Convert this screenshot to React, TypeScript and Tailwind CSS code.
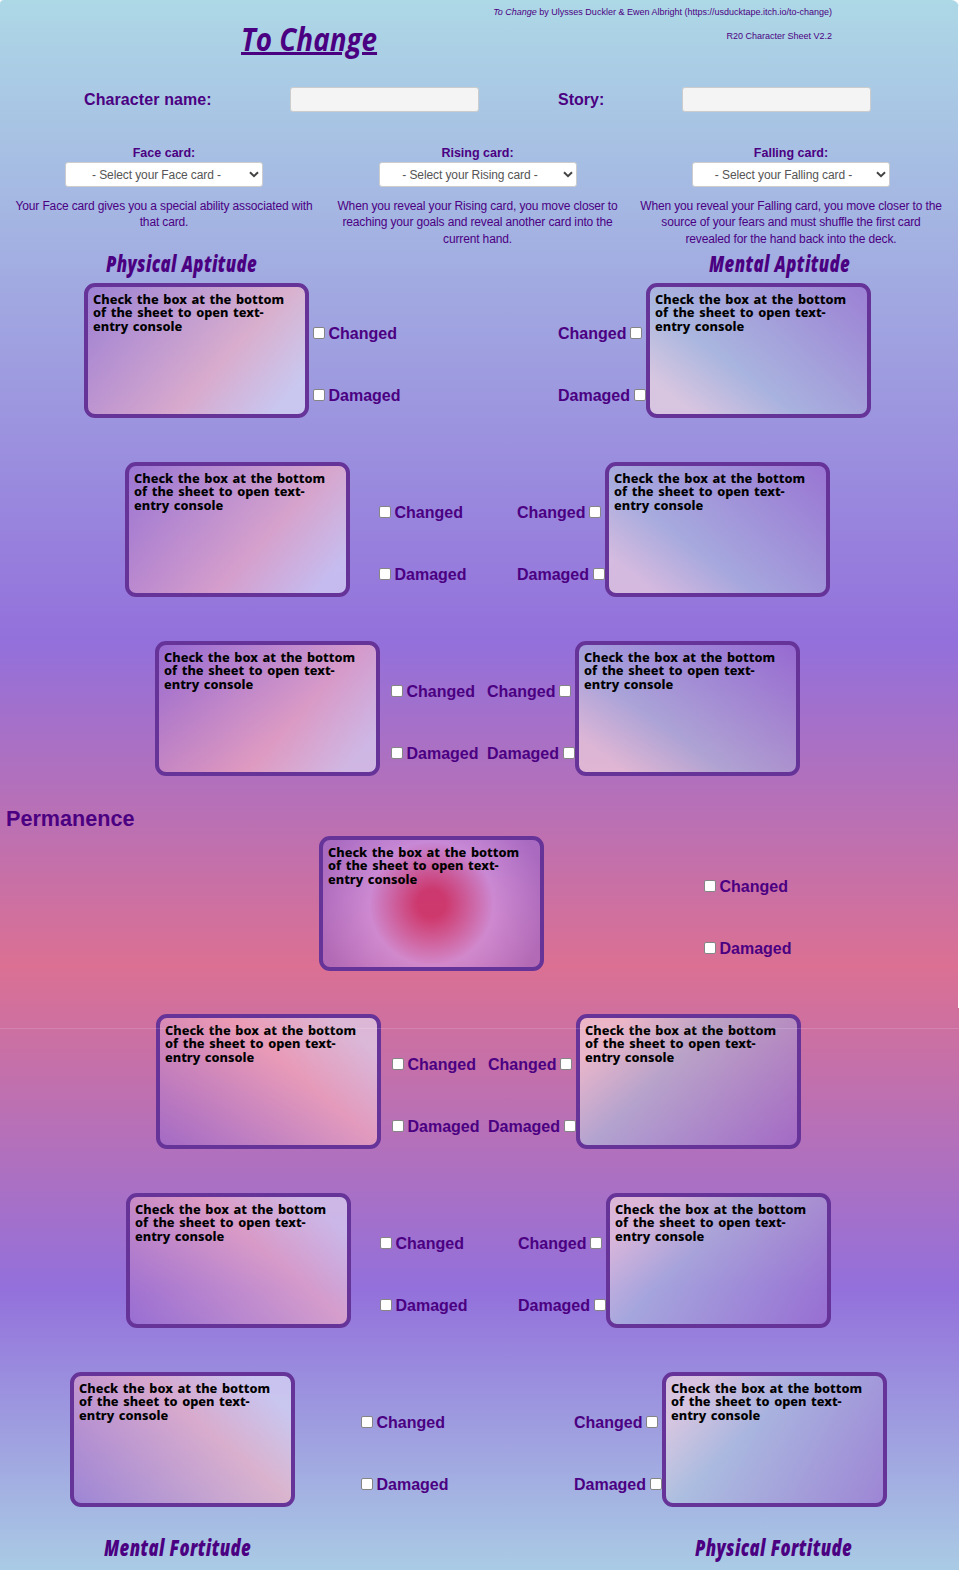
import React from "react";

const NOTE = ["Check the box at the bottom", "of the sheet to open text-", "entry console"];

function Card({ fill }: { fill: string }) {
  return (
    <div className={`h-[135px] w-[225px] shrink-0 rounded-[11px] border-4 border-[#663399] pt-[6px] pl-[5px] ${fill}`}>
      <p className="w-[190px] origin-left scale-x-[1.063] font-['Noto_Sans',sans-serif] text-[12px] leading-[13.4px] font-extrabold [word-spacing:1.2px] whitespace-nowrap text-black">
        {NOTE[0]}
        <br />
        {NOTE[1]}
        <br />
        {NOTE[2]}
      </p>
    </div>
  );
}

function Box() {
  return (
    <input
      type="checkbox"
      className="block h-3 w-3 shrink-0 appearance-none rounded-[2px] border border-[#858585] bg-white"
    />
  );
}

function Checks({ side }: { side: "left" | "right" }) {
  return (
    <div className="flex w-[94px] shrink-0 flex-col gap-[42px] pt-10 text-base leading-5 font-bold">
      {["Changed", "Damaged"].map((name) => (
        <label key={name} className="flex h-5 items-center gap-[3.5px] whitespace-nowrap">
          {side === "left" && <Box />}
          <span className="pt-[1.4px]">{name}</span>
          {side === "right" && <Box />}
        </label>
      ))}
    </div>
  );
}

type Row = { pad: string; a: string; b: string; c: string; left: string; right: string };

const leftTop = "bg-[linear-gradient(133deg,#9966cc99_0%,#ffb6c199_61%,#e6e6fa99_90%)] bg-origin-padding";
const rightTop = "bg-[linear-gradient(217deg,#9966cc99_0%,#b0c4de99_62%,#ffe4e199_88%)] bg-origin-padding";
const leftBottom = "bg-[linear-gradient(40deg,#9966cc99_0%,#ffb6c199_60%,#e6e6fa99_88%)] bg-origin-padding";
const rightBottom = "bg-[linear-gradient(315deg,#9966cc99_0%,#b0c4de99_60%,#ffe4e199_87%)] bg-origin-padding";

const upper: Row[] = [
  { pad: "pl-[84px]", a: "w-[4px]", b: "w-[151px]", c: "-ml-[6px]", left: leftTop, right: rightTop },
  { pad: "pl-[125px]", a: "w-[29px]", b: "w-[44px]", c: "-ml-[6px]", left: leftTop, right: rightTop },
  { pad: "pl-[155px]", a: "w-[11px]", b: "w-[2px]", c: "-ml-[6px]", left: leftTop, right: rightTop },
];

const lower: Row[] = [
  { pad: "pl-[156px]", a: "w-[11px]", b: "w-[2px]", c: "-ml-[6px]", left: leftBottom, right: rightBottom },
  { pad: "pl-[126px]", a: "w-[29px]", b: "w-[44px]", c: "-ml-[6px]", left: leftBottom, right: rightBottom },
  { pad: "pl-[70px]", a: "w-[66px]", b: "w-[119px]", c: "-ml-[6px]", left: leftBottom, right: rightBottom },
];

function CardRow({ row }: { row: Row }) {
  return (
    <div className={`flex h-[135px] ${row.pad}`}>
      <Card fill={row.left} />
      <div className={`shrink-0 ${row.a}`} />
      <Checks side="left" />
      <div className={`shrink-0 ${row.b}`} />
      <Checks side="right" />
      <div className={`shrink-0 ${row.c}`} />
      <Card fill={row.right} />
    </div>
  );
}

function Heading({ children }: { children: string }) {
  return (
    <h2 className="origin-left scale-x-[0.745] font-['Open_Sans',sans-serif] text-[22.5px] leading-[31px] font-extrabold tracking-[0.5px] whitespace-nowrap italic">
      {children}
    </h2>
  );
}

const picks = [
  { name: "Face", lines: ["Your Face card gives you a special ability associated with", "that card."] },
  {
    name: "Rising",
    lines: ["When you reveal your Rising card, you move closer to", "reaching your goals and reveal another card into the", "current hand."],
  },
  {
    name: "Falling",
    lines: ["When you reveal your Falling card, you move closer to the", "source of your fears and must shuffle the first card", "revealed for the hand back into the deck."],
  },
];

export default function App() {
  return (
    <div className="h-[1570px] w-[960px] overflow-hidden bg-white font-['Liberation_Sans',Arial,sans-serif] text-[#4b0082]">
      <main className="relative h-[1570px] w-[959px] overflow-hidden rounded-tl-[4px] rounded-tr-[8px] bg-[linear-gradient(180deg,#add8e6_0px,#9370db_644px,#db7093_966px,#9370db_1288px,#add8e6_1610px)]">
        <header className="flex h-[87px]">
          <h1 className="w-[480px] pt-[13px] pl-[241px]">
            <span className="inline-block origin-left scale-x-[0.87] font-['Open_Sans',sans-serif] text-[32px] leading-[52px] font-bold whitespace-nowrap italic underline decoration-[2.5px] underline-offset-[1px]">
              To Change
            </span>
          </h1>
          <div className="w-[352px] pt-[6px] text-right text-[9px] leading-3">
            <p>
              <i>To Change</i> by Ulysses Duckler &amp; Ewen Albright (https://usducktape.itch.io/to-change)
            </p>
            <p className="mt-3">R20 Character Sheet V2.2</p>
          </div>
        </header>

        <div className="flex h-[60px] items-start pl-[84px] text-base leading-[25px] font-bold">
          <label className="w-[206px] tracking-[0.1px]">Character name:</label>
          <input className="h-[25px] w-[189px] rounded-[3px] border border-[#ccc] bg-[#f4f4f4]" />
          <label className="ml-[79px] w-[124px]">Story:</label>
          <input className="h-[25px] w-[189px] rounded-[3px] border border-[#ccc] bg-[#f4f4f4]" />
        </div>

        <div className="grid h-[101px] grid-cols-[314px_313px_314px] pl-[7px] text-center">
          {picks.map((p) => (
            <section key={p.name}>
              <h3 className="h-[15px] text-[12.5px] leading-[12px] font-bold">{p.name} card:</h3>
              <div className="relative mx-auto h-[25px] w-[198px]">
                <select className="block h-[25px] w-full appearance-none rounded-[3px] border border-[#ccc] bg-white pr-[15px] pl-0 text-center text-[12px] tracking-[-0.1px] text-[#555]">
                  <option>- Select your {p.name} card -</option>
                </select>
                <svg className="absolute top-[9px] right-[4px] h-[7px] w-[10px]" viewBox="0 0 10 7">
                  <path d="M1 1.2 L5 5.2 L9 1.2" fill="none" stroke="#444" strokeWidth="2" />
                </svg>
              </div>
              <div className="-mx-3 mt-[10.7px] text-[12px] leading-[16.5px] tracking-[-0.14px] whitespace-nowrap">
                {p.lines.map((l) => (
                  <p key={l}>{l}</p>
                ))}
              </div>
            </section>
          ))}
        </div>

        <div className="flex h-[35px] pl-[106px]">
          <div className="w-[603px]">
            <Heading>Physical Aptitude</Heading>
          </div>
          <div className="w-[200px]">
            <Heading>Mental Aptitude</Heading>
          </div>
        </div>

        <div className="flex flex-col gap-[44px]">
          {upper.map((row, i) => (
            <CardRow key={i} row={row} />
          ))}
        </div>

        <h2 className="h-[60px] pt-[30px] pl-[6px] text-[21.6px] leading-[26px] font-bold">Permanence</h2>
        <div className="flex h-[135px] pl-[319px]">
          <Card fill="bg-[radial-gradient(circle,#cd144b99_0px,#cd144b99_14px,#cc99f099_62px,#9966cc99_115px)] bg-origin-padding" />
          <div className="w-[160px] shrink-0" />
          <Checks side="left" />
        </div>

        <div className="mt-[43px] flex flex-col gap-[44px]">
          {lower.map((row, i) => (
            <CardRow key={i} row={row} />
          ))}
        </div>

        <div className="flex pt-[25px] pl-[104px]">
          <div className="w-[591px]">
            <Heading>Mental Fortitude</Heading>
          </div>
          <div className="w-[200px]">
            <Heading>Physical Fortitude</Heading>
          </div>
        </div>
        <div className="absolute top-[1028px] left-0 h-px w-full bg-white/15" />
        <div className="absolute top-0 right-0 h-[1008px] w-px bg-white" />
      </main>
    </div>
  );
}
